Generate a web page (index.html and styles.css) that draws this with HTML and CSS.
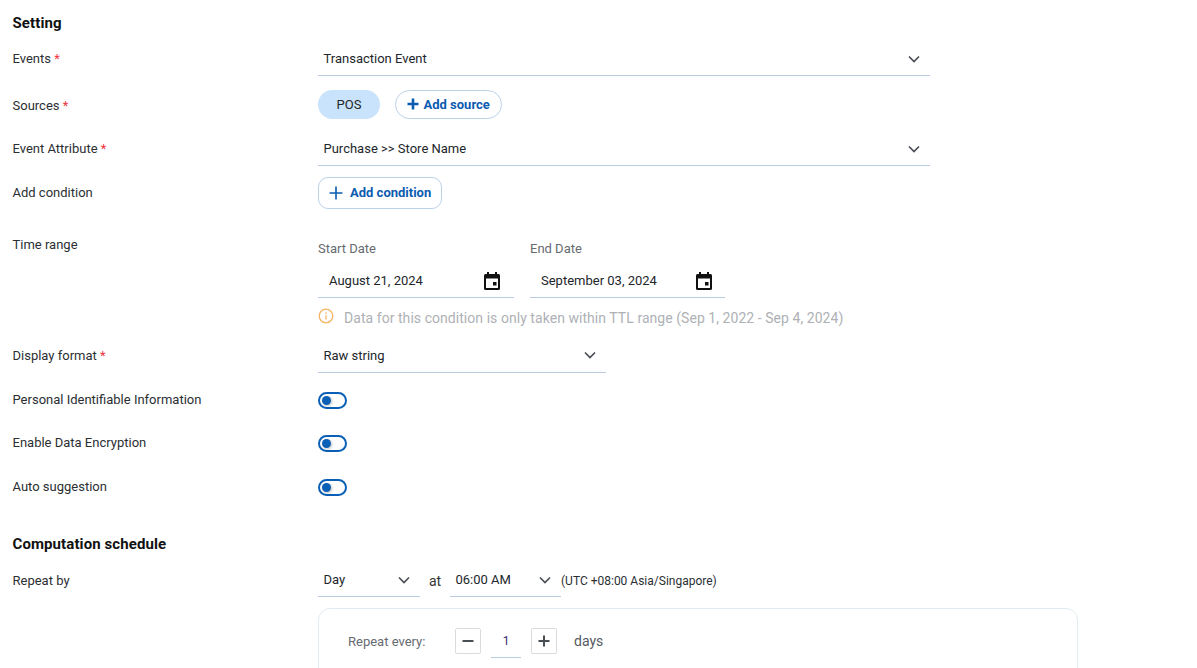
FILE: index.html
```html
<!DOCTYPE html>
<html lang="en">
<head>
<meta charset="utf-8">
<title>Setting</title>
<link rel="stylesheet" href="styles.css">
</head>
<body>
<main class="page">
  <h2 class="title title-setting">Setting</h2>

  <div class="row row-events">
    <div class="label">Events <span class="req">*</span></div>
    <div class="select select-wide"><span>Transaction Event</span><svg class="chev" viewBox="0 0 12 8"><path d="M1 1.5l5 5 5-5"/></svg></div>
  </div>

  <div class="row row-sources">
    <div class="label">Sources <span class="req">*</span></div>
    <div class="inline">
      <span class="chip">POS</span>
      <button class="btn btn-source"><svg class="plus plus-bold" viewBox="0 0 12 12"><path d="M6 .5v11M.5 6h11"/></svg>Add source</button>
    </div>
  </div>

  <div class="row row-attr">
    <div class="label">Event Attribute <span class="req">*</span></div>
    <div class="select select-wide"><span>Purchase &gt;&gt; Store Name</span><svg class="chev" viewBox="0 0 12 8"><path d="M1 1.5l5 5 5-5"/></svg></div>
  </div>

  <div class="row row-cond">
    <div class="label">Add condition</div>
    <button class="btn btn-cond"><svg class="plus plus-thin" viewBox="0 0 14 14"><path d="M7 .5v13M.5 7h13"/></svg>Add condition</button>
  </div>

  <div class="row row-time">
    <div class="label">Time range</div>
    <div class="time-col">
      <div class="dates">
        <div class="date">
          <div class="date-label">Start Date</div>
          <div class="date-input"><span>August 21, 2024</span><svg class="cal" viewBox="0 0 16 18"><path class="cal-fill" d="M3 0h2v2h6V0h2v2h1.500A1.500 1.500 0 0 1 16 3.500v13a1.500 1.500 0 0 1-1.500 1.500h-13A1.500 1.500 0 0 1 0 16.500v-13A1.500 1.500 0 0 1 1.500 2H3zM2 6.500V16h12V6.500zM9 10h3.500v3.500H9z"/></svg></div>
        </div>
        <div class="date">
          <div class="date-label">End Date</div>
          <div class="date-input"><span>September 03, 2024</span><svg class="cal" viewBox="0 0 16 18"><path class="cal-fill" d="M3 0h2v2h6V0h2v2h1.500A1.500 1.500 0 0 1 16 3.500v13a1.500 1.500 0 0 1-1.500 1.500h-13A1.500 1.500 0 0 1 0 16.500v-13A1.500 1.500 0 0 1 1.500 2H3zM2 6.500V16h12V6.500zM9 10h3.500v3.500H9z"/></svg></div>
        </div>
      </div>
      <div class="notice">
        <svg class="info" viewBox="0 0 16 16"><circle cx="8" cy="8" r="6.800"/><path d="M8 7.200v4.200M8 4.200v1.600"/></svg>
        <span>Data for this condition is only taken within TTL range (Sep 1, 2022 - Sep 4, 2024)</span>
      </div>
    </div>
  </div>

  <div class="row row-format">
    <div class="label">Display format <span class="req">*</span></div>
    <div class="select select-mid"><span>Raw string</span><svg class="chev" viewBox="0 0 12 8"><path d="M1 1.5l5 5 5-5"/></svg></div>
  </div>

  <div class="row row-toggle">
    <div class="label">Personal Identifiable Information</div>
    <span class="toggle"></span>
  </div>
  <div class="row row-toggle">
    <div class="label">Enable Data Encryption</div>
    <span class="toggle"></span>
  </div>
  <div class="row row-toggle">
    <div class="label">Auto suggestion</div>
    <span class="toggle"></span>
  </div>

  <h2 class="title title-schedule">Computation schedule</h2>

  <div class="row row-repeat">
    <div class="label">Repeat by</div>
    <div class="inline inline-repeat">
      <div class="select select-day"><span>Day</span><svg class="chev" viewBox="0 0 12 8"><path d="M1 1.5l5 5 5-5"/></svg></div>
      <span class="at">at</span>
      <div class="select select-time"><span>06:00 AM</span><svg class="chev" viewBox="0 0 12 8"><path d="M1 1.5l5 5 5-5"/></svg></div>
      <span class="tz">(UTC +08:00 Asia/Singapore)</span>
    </div>
  </div>

  <section class="card">
    <span class="card-label">Repeat every:</span>
    <button class="step"><svg viewBox="0 0 12 12"><path d="M.5 6h11"/></svg></button>
    <span class="step-value">1</span>
    <button class="step"><svg viewBox="0 0 12 12"><path d="M6 .5v11M.5 6h11"/></svg></button>
    <span class="unit">days</span>
  </section>
</main>
</body>
</html>
```

FILE: styles.css
```css
* { box-sizing: border-box; }
html, body { margin: 0; height: 100%; overflow: hidden; background: #fff; }
body { font-family: Roboto, "Liberation Sans", sans-serif; font-size: 13px; color: #1f2328; }

.page { padding: 14px 0 0 12.5px; width: 1197px; height: 668px; overflow: hidden; }

.title { margin: 0; font-size: 15px; line-height: 18px; font-weight: 700; letter-spacing: .1px; color: #111; }
.title-schedule { margin-top: 39px; }

.row { display: flex; align-items: center; }
.label { width: 305.5px; flex: none; line-height: 18px; color: #2b2f33; }
.req { color: #f0353f; }

.row-events { margin-top: 11px; height: 33px; }
.row-events .label, .row-attr .label { margin-top: -1px; }
.row-sources { margin-top: 14px; height: 29px; }
.row-sources .label { margin-top: 2px; }
.row-attr { margin-top: 14px; height: 33px; }
.row-cond { margin-top: 10px; height: 33px; }
.row-time { margin-top: 27px; align-items: flex-start; }
.row-format { margin-top: 9px; height: 34px; }
.row-toggle { height: 17px; margin-top: 27px; }
.row-toggle .label { margin-top: -1px; }
.row-format + .row-toggle { margin-top: 19px; }
.row-format + .row-toggle + .row-toggle { margin-top: 26px; }

.select { display: flex; align-items: center; justify-content: space-between; height: 100%; padding: 0 10px 1px 5.5px; border-bottom: 1px solid #b9cde2; color: #22262a; }
.select-wide { width: 612px; }
.select-mid { width: 288px; }
.chev { width: 12px; height: 8px; flex: none; fill: none; stroke: #4a4f55; stroke-width: 1.7; }

.inline { display: flex; align-items: center; gap: 15px; }
.chip { width: 62px; height: 29px; line-height: 29px; text-align: center; background: #c9e3fc; border-radius: 15px; color: #22262a; }

.btn { display: inline-flex; align-items: center; padding: 0; background: #fff; border: 1px solid #bcd1e8; font: 700 13px Roboto, "Liberation Sans", sans-serif; color: #0b5cb0; }
.btn-source { width: 107px; height: 29px; border-radius: 15px; padding-left: 11px; gap: 4.5px; }
.btn-cond { width: 124px; height: 32px; border-radius: 10px; padding-left: 10px; gap: 7px; }
.plus { fill: none; stroke: #0b5cb0; flex: none; }
.plus-bold { width: 12px; height: 12px; stroke-width: 2.6; margin-top: -1px; }
.plus-thin { width: 14px; height: 14px; stroke-width: 1.6; }

.time-col { display: flex; flex-direction: column; }
.dates { display: flex; gap: 16px; }
.date { width: 196px; }
.date + .date { width: 195px; }
.date-label { line-height: 18px; color: #666b70; margin-top: 4px; }
.date-input { display: flex; align-items: center; justify-content: space-between; height: 34px; margin-top: 6px; padding: 0 14px 0 11px; border-bottom: 1px solid #b9cde2; color: #22262a; }
.date + .date .date-input { padding-right: 13px; }
.cal { width: 16px; height: 18px; fill: #111; flex: none; }
.cal-fill { fill-rule: evenodd; }

.notice { display: flex; align-items: center; margin-top: 8px; height: 24px; color: #aeb1b5; font-size: 14px; letter-spacing: .05px; }
.info { width: 16px; height: 16px; margin-right: 10px; margin-top: -5px; fill: none; stroke: #f6b364; stroke-width: 1.3; flex: none; }

.toggle { position: relative; display: block; width: 29px; height: 17px; border: 2px solid #0a60b6; border-radius: 9px; background: #fff; }
.toggle::after { content: ""; position: absolute; left: 2px; top: 2px; width: 9px; height: 9px; border-radius: 50%; background: #0a60b6; box-shadow: 1px 1px 3px rgba(0,0,0,.25); }

.row-repeat { margin-top: 11px; height: 33px; }
.inline-repeat { gap: 0; height: 100%; }
.select-day { width: 102px; }
.at { width: 30px; text-align: center; font-size: 14px; color: #333; }
.select-time { width: 111px; padding-left: 5.5px; padding-right: 10px; }
.tz { font-size: 12px; color: #2b2f33; white-space: nowrap; }

.card { display: flex; align-items: center; width: 760px; height: 90px; margin: 11px 0 0 305.5px; padding: 0 0 24px 29px; border: 1px solid #e1ecf0; border-radius: 12px; background: #fff; }
.card-label { width: 107px; flex: none; color: #666b70; }
.step { display: flex; align-items: center; justify-content: center; width: 26px; height: 26px; padding: 0; background: #fff; border: 1px solid #d9dcdf; border-radius: 2px; }
.step svg { width: 12px; height: 12px; fill: none; stroke: #4a4f55; stroke-width: 2; }
.step-value { width: 30px; height: 29px; margin: 4px 10px 0; line-height: 24px; text-align: center; border-bottom: 1px solid #b9cde2; color: #3a2a6a; font-size: 12px; }
.unit { margin-left: 17px; font-size: 14px; color: #555a60; }
```
